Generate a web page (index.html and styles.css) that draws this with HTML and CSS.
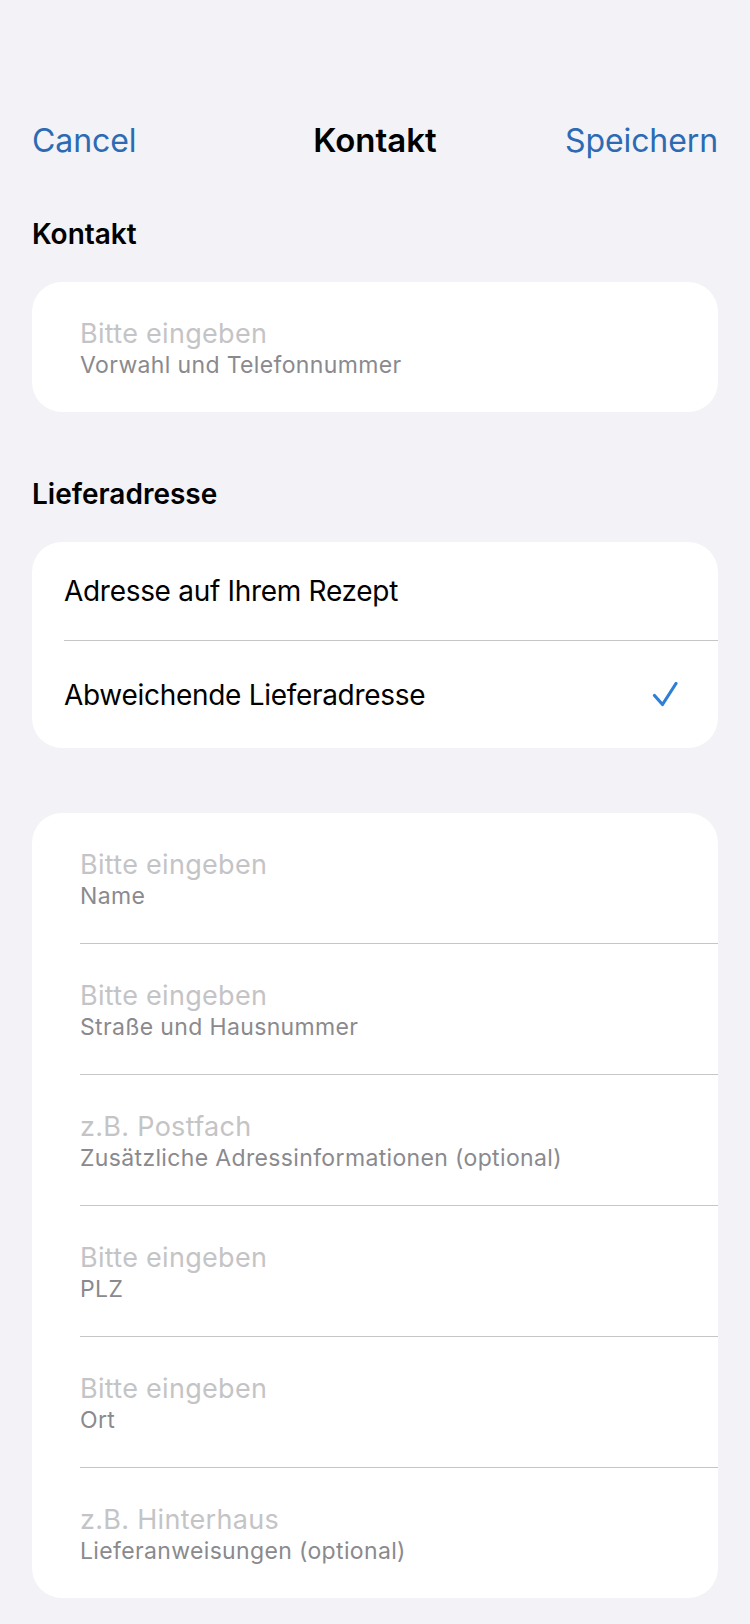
FILE: index.html
```html
<!DOCTYPE html>
<html lang="de">
<head>
<meta charset="utf-8">
<title>Kontakt</title>
<link rel="stylesheet" href="styles.css">
</head>
<body>
<div class="screen">
  <header class="nav">
    <span class="nav-btn nav-btn--left">Cancel</span>
    <span class="nav-title">Kontakt</span>
    <span class="nav-btn nav-btn--right">Speichern</span>
  </header>

  <h2 class="section-title">Kontakt</h2>
  <div class="card">
    <div class="field">
      <span class="placeholder">Bitte eingeben</span>
      <span class="label">Vorwahl und Telefonnummer</span>
    </div>
  </div>

  <h2 class="section-title section-title--second">Lieferadresse</h2>
  <div class="card">
    <div class="option option--first">
      <span class="option-text">Adresse auf Ihrem Rezept</span>
    </div>
    <div class="option option--second">
      <span class="option-text">Abweichende Lieferadresse</span>
      <svg class="check" width="26" height="26" viewBox="0 0 26 26" aria-hidden="true">
        <path d="M2.5 13.5 L10.5 22.5 L24 1.5" fill="none" stroke="#2F7FD7" stroke-width="3.2" stroke-linecap="round" stroke-linejoin="round"/>
      </svg>
    </div>
  </div>

  <div class="card card--address">
    <div class="field field--sep">
      <span class="placeholder">Bitte eingeben</span>
      <span class="label">Name</span>
    </div>
    <div class="field field--sep">
      <span class="placeholder">Bitte eingeben</span>
      <span class="label">Straße und Hausnummer</span>
    </div>
    <div class="field field--sep">
      <span class="placeholder">z.B. Postfach</span>
      <span class="label">Zusätzliche Adressinformationen (optional)</span>
    </div>
    <div class="field field--sep">
      <span class="placeholder">Bitte eingeben</span>
      <span class="label">PLZ</span>
    </div>
    <div class="field field--sep">
      <span class="placeholder">Bitte eingeben</span>
      <span class="label">Ort</span>
    </div>
    <div class="field">
      <span class="placeholder">z.B. Hinterhaus</span>
      <span class="label">Lieferanweisungen (optional)</span>
    </div>
  </div>
</div>
</body>
</html>
```

FILE: styles.css
```css
* { box-sizing: border-box; }

html, body {
  margin: 0;
  padding: 0;
  background: #F2F2F7;
}

body {
  font-family: Inter, "Noto Sans", "Liberation Sans", sans-serif;
  color: #000;
  -webkit-font-smoothing: antialiased;
}

.screen {
  width: 750px;
  min-height: 1624px;
  padding: 96px 32px 0 32px;
}

.nav {
  height: 88px;
  display: grid;
  grid-template-columns: 1fr auto 1fr;
  align-items: center;
}

.nav-btn {
  font-size: 32px;
  color: #2C6BB4;
  letter-spacing: -0.1px;
}

.nav-btn--left { justify-self: start; }
.nav-btn--right { justify-self: end; }

.nav-title {
  font-size: 33px;
  font-weight: 600;
  letter-spacing: 0;
}

.section-title {
  margin: 34px 0 32px 0;
  height: 32px;
  line-height: 32px;
  font-size: 28px;
  font-weight: 600;
  letter-spacing: 0;
}

.section-title--second {
  margin-top: 66px;
  margin-bottom: 32px;
}

.card {
  background: #fff;
  border-radius: 30px;
  overflow: hidden;
}

.card--address {
  margin-top: 65px;
}

.field {
  height: 130px;
  margin-left: 48px;
  padding-top: 3px;
  display: flex;
  flex-direction: column;
  justify-content: center;
}

.field--sep {
  height: 131px;
  border-bottom: 1px solid #C6C6C8;
}

.placeholder {
  font-size: 27px;
  line-height: 33px;
  color: #C4C4C6;
  letter-spacing: 0.3px;
}

.label {
  font-size: 23px;
  line-height: 30px;
  color: #8A8A8E;
  letter-spacing: 0.35px;
}

.option {
  display: flex;
  align-items: center;
  justify-content: space-between;
  padding: 0 40px 0 32px;
}

.option--first {
  height: 99px;
  border-bottom: 1px solid #C6C6C8;
  margin-left: 32px;
  padding-left: 0;
}

.option--second {
  height: 107px;
}

.option-text {
  font-size: 28px;
  letter-spacing: -0.3px;
}

.check {
  display: block;
}
```
